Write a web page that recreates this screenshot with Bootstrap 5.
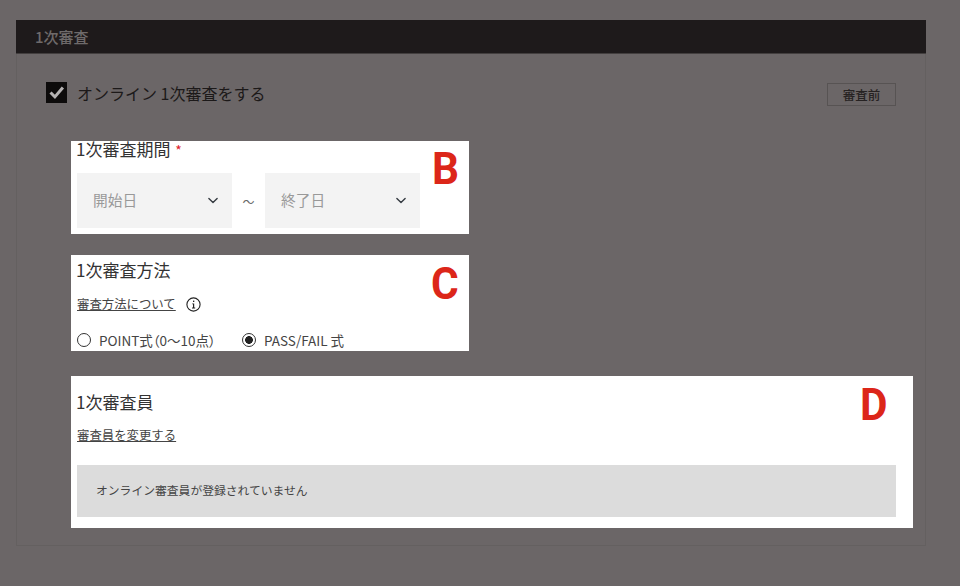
<!DOCTYPE html>
<html lang="ja">
<head>
<meta charset="utf-8">
<title>1次審査</title>
<link href="https://cdn.jsdelivr.net/npm/bootstrap@5.3.0/dist/css/bootstrap.min.css" rel="stylesheet">
<style>
html,body{height:586px;overflow:hidden}
body{background:#6b6667;font-family:"Noto Sans CJK JP","Noto Sans",sans-serif;color:#222;}
.shell{padding:20px 34px 0 16px}
.frame{border:1px solid #646060;border-top:0;height:526px}
.bar{background:#1e1a1b;border-bottom:1px solid #433f3f;height:34px;margin:0 -1px;padding-left:19px;color:#6e6a6a;font-size:15px;font-weight:500;line-height:33px}
.check-row{padding:29px 29px 0 29px;height:87px}
.check-row .form-check-input{width:21px;height:21px;margin:-2px 0 0;border:0;border-radius:0;background-color:#0d0b0b;background-size:21px;opacity:1;background-image:url("data:image/svg+xml,%3csvg xmlns='http://www.w3.org/2000/svg' viewBox='0 0 21 21'%3e%3cpath fill='none' stroke='%23b5b2b2' stroke-width='3' d='M4.5 10.5l4.4 4.4 8-9.4'/%3e%3c/svg%3e")}
.check-row label{font-size:16px;color:#1c1919;margin-left:10px;line-height:21px;opacity:1}
.state{width:69px;height:23px;border:1px solid #575353;font-size:12.5px;font-weight:500;color:#262222;line-height:21px;text-align:center}
.sheet{background:#fff;position:relative;overflow:hidden;padding-left:6px;color:#333}
.sheet-b{margin-left:54px;width:398px;height:93px}
.sheet-c{margin:21px 0 0 54px;width:398px;height:96px}
.sheet-d{margin:25px 0 0 54px;width:842px;height:152px}
.ttl{font-size:17px;line-height:20px;color:#333;margin:0 0 0 -1px;font-weight:400}
.sheet-b .ttl{margin-top:-2px}
.sheet-c .ttl{margin-top:5px}
.sheet-d .ttl{margin-top:16px}
.req{color:#e0202c;font-size:14px;margin-left:1px}
.pick{width:155px;height:55px;background-color:#f3f3f3;border:0;border-radius:0;color:#999;font-size:14.7px;padding-left:16px;background-position:right 12px center;background-size:14px 11px}
.dates{margin-top:13px}
.wave{width:33px;text-align:center;color:#666;font-size:12px;padding-top:3px}
.lnk{display:inline-block;font-size:12.4px;color:#444;line-height:16px;text-decoration:underline}
.lnk-row{margin-top:9px}
.info{margin-left:10.5px;flex:none}
.form-check-input.dot{width:14px;height:14px;margin:0;border:1px solid #333;background-color:#fff;opacity:1}
.form-check-input.dot:checked{background-image:radial-gradient(circle,#222 0 3.6px,transparent 4.1px);background-color:#fff;border-color:#333}
.opt{font-size:13.5px;color:#444;margin-left:8px;line-height:16px;opacity:1;font-feature-settings:"palt"}
.opt-first{width:143px;flex:none}
.opts{margin-top:20px}
.empty{background:#dcdcdc;width:819px;height:52px;margin-top:20px;padding-left:19px;font-size:11.8px;line-height:50px;color:#444}
.tag{position:absolute;font-family:Roboto,sans-serif;font-weight:700;font-size:45px;line-height:46px;color:#dc2619;transform:scaleX(.94);transform-origin:left top}
.sheet-b .tag{left:361px;top:5px}
.sheet-c .tag{left:360px;top:6px}
.sheet-d .tag{left:789px;top:6px}
</style>
</head>
<body>
<div class="shell">
  <section class="frame">
    <div class="bar">1次審査</div>
    <div class="check-row d-flex align-items-start justify-content-between">
      <div class="d-flex align-items-center">
        <input class="form-check-input" type="checkbox" id="c1" checked>
        <label for="c1">オンライン 1次審査をする</label>
      </div>
      <div class="state">審査前</div>
    </div>
    <div class="sheet sheet-b">
      <h6 class="ttl">1次審査期間 <span class="req">*</span></h6>
      <div class="dates d-flex align-items-center">
        <select class="form-select pick"><option>開始日</option></select>
        <span class="wave">〜</span>
        <select class="form-select pick"><option>終了日</option></select>
      </div>
      <span class="tag">B</span>
    </div>
    <div class="sheet sheet-c">
      <h6 class="ttl">1次審査方法</h6>
      <div class="d-flex align-items-center mt-3">
        <a href="#" class="lnk">審査方法について</a>
        <svg class="info" width="15" height="15" viewBox="0 0 15 15" aria-hidden="true"><circle cx="7.5" cy="7.5" r="6.6" fill="none" stroke="#222" stroke-width="1.1"/><path d="M6.2 6.5h2v4.1h1v.8H6v-.8h1V7.3h-.8z" fill="#222"/><rect x="7" y="3.6" width="1.3" height="1.4" fill="#222"/></svg>
      </div>
      <div class="opts d-flex align-items-center">
        <input class="form-check-input dot" type="radio" name="m" id="r1">
        <label class="opt opt-first" for="r1">POINT式（0〜10点）</label>
        <input class="form-check-input dot" type="radio" name="m" id="r2" checked>
        <label class="opt" for="r2">PASS/FAIL 式</label>
      </div>
      <span class="tag">C</span>
    </div>
    <div class="sheet sheet-d">
      <h6 class="ttl">1次審査員</h6>
      <div class="lnk-row"><a href="#" class="lnk">審査員を変更する</a></div>
      <div class="empty">オンライン審査員が登録されていません</div>
      <span class="tag">D</span>
    </div>
  </section>
</div>
<script src="https://cdn.jsdelivr.net/npm/bootstrap@5.3.0/dist/js/bootstrap.bundle.min.js"></script>
</body>
</html>
